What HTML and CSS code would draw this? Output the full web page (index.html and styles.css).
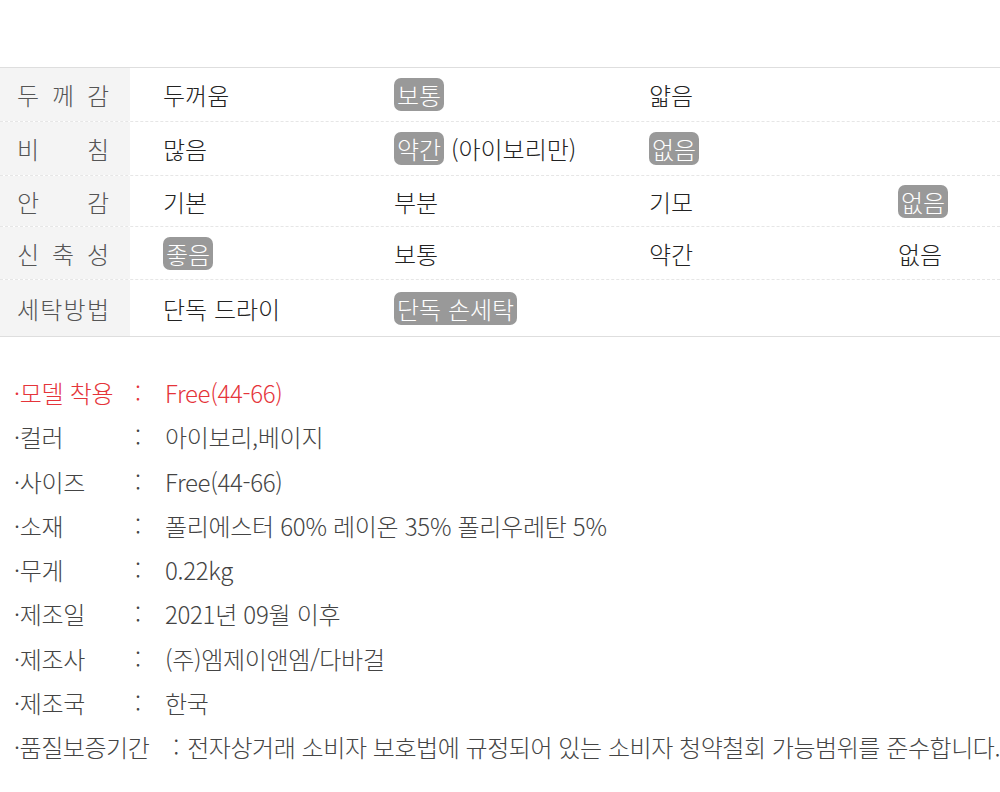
FILE: index.html
```html
<!DOCTYPE html>
<html lang="ko">
<head>
    <meta charset="UTF-8">
    <meta name="viewport" content="width=device-width, initial-scale=1.0">
    <title>상품 상세 정보</title>
    <link rel="stylesheet" href="styles.css">
</head>
<body>
    <div class="page">
        <!-- 소재 특성 표 -->
        <div class="spec-table">
            <div class="spec-row">
                <div class="spec-label"><span>두</span><span>께</span><span>감</span></div>
                <div class="spec-cell">두꺼움</div>
                <div class="spec-cell"><span class="pick">보통</span></div>
                <div class="spec-cell">얇음</div>
                <div class="spec-cell"></div>
            </div>
            <div class="spec-row">
                <div class="spec-label"><span>비</span><span>침</span></div>
                <div class="spec-cell">많음</div>
                <div class="spec-cell"><span class="pick">약간</span> (아이보리만)</div>
                <div class="spec-cell"><span class="pick">없음</span></div>
                <div class="spec-cell"></div>
            </div>
            <div class="spec-row">
                <div class="spec-label"><span>안</span><span>감</span></div>
                <div class="spec-cell">기본</div>
                <div class="spec-cell">부분</div>
                <div class="spec-cell">기모</div>
                <div class="spec-cell"><span class="pick">없음</span></div>
            </div>
            <div class="spec-row">
                <div class="spec-label"><span>신</span><span>축</span><span>성</span></div>
                <div class="spec-cell"><span class="pick">좋음</span></div>
                <div class="spec-cell">보통</div>
                <div class="spec-cell">약간</div>
                <div class="spec-cell">없음</div>
            </div>
            <div class="spec-row">
                <div class="spec-label"><span>세</span><span>탁</span><span>방</span><span>법</span></div>
                <div class="spec-cell">단독 드라이</div>
                <div class="spec-cell"><span class="pick">단독 손세탁</span></div>
                <div class="spec-cell"></div>
                <div class="spec-cell"></div>
            </div>
        </div>

        <!-- 상품 정보 -->
        <ul class="info-list">
            <li class="info-item info-item--red">
                <span class="info-key">·모델 착용</span><span class="info-colon">:</span><span class="info-value">Free(44-66)</span>
            </li>
            <li class="info-item">
                <span class="info-key">·컬러</span><span class="info-colon">:</span><span class="info-value">아이보리,베이지</span>
            </li>
            <li class="info-item">
                <span class="info-key">·사이즈</span><span class="info-colon">:</span><span class="info-value">Free(44-66)</span>
            </li>
            <li class="info-item">
                <span class="info-key">·소재</span><span class="info-colon">:</span><span class="info-value">폴리에스터 60% 레이온 35% 폴리우레탄 5%</span>
            </li>
            <li class="info-item">
                <span class="info-key">·무게</span><span class="info-colon">:</span><span class="info-value">0.22kg</span>
            </li>
            <li class="info-item">
                <span class="info-key">·제조일</span><span class="info-colon">:</span><span class="info-value">2021년 09월 이후</span>
            </li>
            <li class="info-item">
                <span class="info-key">·제조사</span><span class="info-colon">:</span><span class="info-value">(주)엠제이앤엠/다바걸</span>
            </li>
            <li class="info-item">
                <span class="info-key">·제조국</span><span class="info-colon">:</span><span class="info-value">한국</span>
            </li>
            <li class="info-item info-item--long">
                <span class="info-key">·품질보증기간</span><span class="info-colon">:</span><span class="info-value">전자상거래 소비자 보호법에 규정되어 있는 소비자 청약철회 가능범위를 준수합니다.</span>
            </li>
        </ul>
    </div>
</body>
</html>
```

FILE: styles.css
```css
/* Page */
body {
    margin: 0;
    padding: 0;
    background: #fff;
    font-family: "Noto Sans CJK KR", "Noto Sans", sans-serif;
    font-weight: 300;
    color: #333;
    overflow: hidden;
}

.page {
    width: 1000px;
    padding-top: 67px;
}

/* Spec table */
.spec-table {
    border-top: 1px solid #dedede;
}

.spec-row {
    display: grid;
    grid-template-columns: 130px 264px 255px 249px 1fr;
    align-items: center;
    height: 53px;
    border-bottom: 1px dashed #e6e6e6;
}

.spec-row:nth-child(3) {
    height: 50px;
}

.spec-row:nth-child(4) {
    height: 52px;
}

.spec-row:last-child {
    height: 56px;
    border-bottom: 1px solid #dedede;
}

.spec-label {
    height: 100%;
    display: flex;
    align-items: center;
    justify-content: space-between;
    box-sizing: border-box;
    padding: 0 21px 0 17px;
    background: #f4f4f4;
    font-size: 24px;
    color: #555;
}

.spec-cell {
    font-size: 24px;
    color: #222;
    white-space: nowrap;
}

.spec-cell:nth-child(2) {
    padding-left: 33px;
}

.pick {
    display: inline-block;
    padding: 0 3px;
    line-height: 33px;
    border-radius: 7px;
    background: #999;
    color: #fff;
}

/* Info list */
.info-list {
    list-style: none;
    margin: 0;
    padding: 34px 0 0 14px;
}

.info-item {
    display: flex;
    font-size: 24px;
    line-height: 44.25px;
    letter-spacing: -0.3px;
    color: #444;
    white-space: nowrap;
}

.info-item--red {
    color: #e5343a;
}

.info-key {
    min-width: 121px;
}

.info-colon {
    width: 30px;
}

.info-item--long {
    letter-spacing: -0.45px;
}

.info-item--long .info-key {
    min-width: 0;
    margin-right: 24px;
}

.info-item--long .info-colon {
    width: 14px;
}
```
